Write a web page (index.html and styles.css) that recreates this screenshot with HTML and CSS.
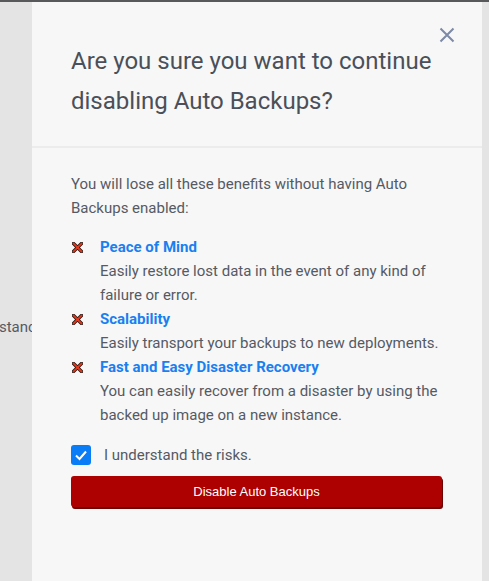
FILE: index.html
```html
<!DOCTYPE html>
<html>
<head>
<meta charset="utf-8">
<link rel="stylesheet" href="styles.css">
</head>
<body>
<div class="topline"></div>
<div class="screen">
  <div class="backdrop"><span class="behind">instance</span></div>
  <div class="panel">
    <div class="panel-head">
      <h1 class="title">Are you sure you want to continue disabling Auto Backups?</h1>
      <button class="close" aria-label="Close">
        <svg width="16" height="16" viewBox="0 0 16 16"><path d="M1.5 1.5L14.5 14.5M14.5 1.5L1.5 14.5" stroke="#7d89a6" stroke-width="2" fill="none"/></svg>
      </button>
    </div>
    <div class="panel-body">
      <p class="intro">You will lose all these benefits without having Auto Backups enabled:</p>
      <ul class="benefits">
        <li class="benefit">
          <span class="x-icon"><svg width="11" height="11" viewBox="0 0 11 11"><path d="M1.5 1.5L9.5 9.5M9.5 1.5L1.5 9.5" stroke="#2a1410" stroke-width="3.4" stroke-linecap="square"/><path d="M1.5 1.5L9.5 9.5M9.5 1.5L1.5 9.5" stroke="#e03a1e" stroke-width="1.8" stroke-linecap="square"/></svg></span>
          <div class="benefit-text">
            <div class="benefit-title">Peace of Mind</div>
            <div class="benefit-desc">Easily restore lost data in the event of any kind of failure or error.</div>
          </div>
        </li>
        <li class="benefit">
          <span class="x-icon"><svg width="11" height="11" viewBox="0 0 11 11"><path d="M1.5 1.5L9.5 9.5M9.5 1.5L1.5 9.5" stroke="#2a1410" stroke-width="3.4" stroke-linecap="square"/><path d="M1.5 1.5L9.5 9.5M9.5 1.5L1.5 9.5" stroke="#e03a1e" stroke-width="1.8" stroke-linecap="square"/></svg></span>
          <div class="benefit-text">
            <div class="benefit-title">Scalability</div>
            <div class="benefit-desc">Easily transport your backups to new deployments.</div>
          </div>
        </li>
        <li class="benefit">
          <span class="x-icon"><svg width="11" height="11" viewBox="0 0 11 11"><path d="M1.5 1.5L9.5 9.5M9.5 1.5L1.5 9.5" stroke="#2a1410" stroke-width="3.4" stroke-linecap="square"/><path d="M1.5 1.5L9.5 9.5M9.5 1.5L1.5 9.5" stroke="#e03a1e" stroke-width="1.8" stroke-linecap="square"/></svg></span>
          <div class="benefit-text">
            <div class="benefit-title">Fast and Easy Disaster Recovery</div>
            <div class="benefit-desc">You can easily recover from a disaster by using the backed up image on a new instance.</div>
          </div>
        </li>
      </ul>
      <label class="confirm">
        <span class="checkbox"><svg width="14" height="12" viewBox="0 0 14 12"><path d="M2 6.5L5.5 10L12 2.5" stroke="#fff" stroke-width="2" fill="none"/></svg></span>
        <span class="confirm-text">I understand the risks.</span>
      </label>
      <button class="danger">Disable Auto Backups</button>
    </div>
  </div>
  <div class="edge"></div>
</div>
</body>
</html>
```
FILE: styles.css
```css
* { box-sizing: border-box; }
html, body { margin: 0; padding: 0; }
body {
  width: 489px;
  height: 581px;
  overflow: hidden;
  background: #e4e4e4;
  font-family: Roboto, "Liberation Sans", sans-serif;
  display: flex;
  flex-direction: column;
}
.topline { height: 2px; background: #58595b; flex: none; }
.screen { flex: 1; display: flex; min-height: 0; }
.backdrop {
  width: 32px;
  flex: none;
  overflow: hidden;
  background: #e4e4e4;
  padding-top: 315px;
  white-space: nowrap;
}
.behind {
  display: inline-block;
  margin-left: -13px;
  font-size: 15px;
  line-height: 20px;
  color: #555a64;
}
.panel { flex: 1; background: #f7f7f7; display: flex; flex-direction: column; }
.edge { width: 7px; flex: none; background: #e4e4e4; }
.panel-head {
  position: relative;
  padding: 39px 39px 25px 39px;
  border-bottom: 2px solid #ececec;
}
.title {
  margin: 0;
  font-weight: 400;
  font-size: 24px;
  line-height: 40px;
  color: #4a4f59;
}
.close {
  position: absolute;
  top: 25px;
  right: 27px;
  padding: 0;
  border: 0;
  background: none;
  width: 16px;
  height: 16px;
  display: block;
}
.close svg { display: block; }
.panel-body { padding: 24px 39px 0 39px; }
.intro {
  margin: 0 0 15px;
  font-size: 15px;
  line-height: 24px;
  color: #555a64;
}
.benefits { list-style: none; margin: 0; padding: 0; }
.benefit { display: flex; align-items: flex-start; }
.x-icon { width: 29px; flex: none; padding: 7px 0 0 1px; display: block; }
.x-icon svg { display: block; }
.benefit-title {
  font-size: 15px;
  font-weight: 700;
  line-height: 24px;
  color: #1a7ff0;
}
.benefit-desc { font-size: 15px; line-height: 24px; color: #555a64; }
.confirm { display: flex; align-items: center; margin-top: 18px; gap: 13px; }
.checkbox {
  width: 20px; height: 20px;
  border-radius: 3px;
  background: #0a7cf6;
  display: flex; align-items: center; justify-content: center;
}
.confirm-text { font-size: 15px; line-height: 20px; color: #555a64; }
.danger {
  display: block;
  width: 371px;
  height: 31px;
  margin-top: 11px;
  border: 0;
  border-radius: 3px;
  background: #ad0000;
  box-shadow: 1px 2px 0 #6e0000;
  color: #fff;
  font-family: "Liberation Sans", Arial, sans-serif;
  font-size: 13px;
  padding: 0 0 1px;
}
```
